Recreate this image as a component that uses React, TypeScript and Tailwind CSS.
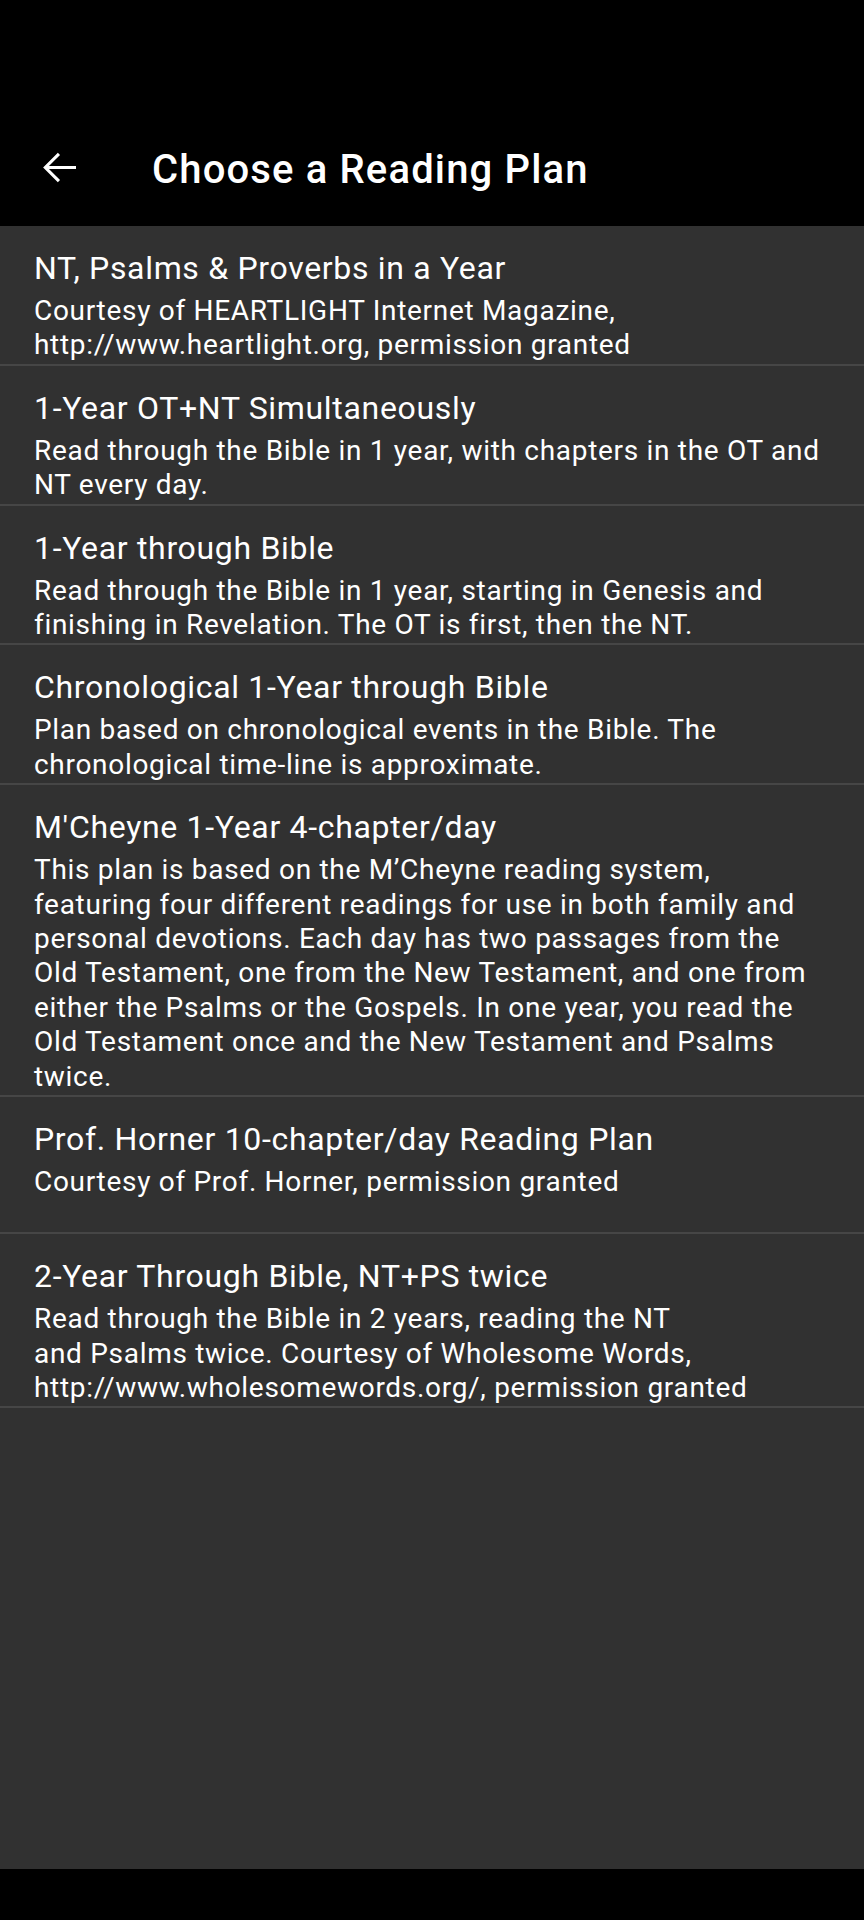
import React from "react";

interface Plan {
  title: string;
  lines: string[];
  minH?: boolean;
}

const plans: Plan[] = [
  {
    title: "NT, Psalms & Proverbs in a Year",
    lines: [
      "Courtesy of HEARTLIGHT Internet Magazine, http://www.heartlight.org, permission granted",
    ],
  },
  {
    title: "1-Year OT+NT Simultaneously",
    lines: [
      "Read through the Bible in 1 year, with chapters in the OT and NT every day.",
    ],
  },
  {
    title: "1-Year through Bible",
    lines: [
      "Read through the Bible in 1 year, starting in Genesis and finishing in Revelation. The OT is first, then the NT.",
    ],
  },
  {
    title: "Chronological 1-Year through Bible",
    lines: [
      "Plan based on chronological events in the Bible. The chronological time-line is approximate.",
    ],
  },
  {
    title: "M'Cheyne 1-Year 4-chapter/day",
    lines: [
      "This plan is based on the M’Cheyne reading system, featuring four different readings for use in both family and personal devotions. Each day has two passages from the Old Testament, one from the New Testament, and one from either the Psalms or the Gospels. In one year, you read the Old Testament once and the New Testament and Psalms twice.",
    ],
  },
  {
    title: "Prof. Horner 10-chapter/day Reading Plan",
    lines: ["Courtesy of Prof. Horner, permission granted"],
    minH: true,
  },
  {
    title: "2-Year Through Bible, NT+PS twice",
    lines: [
      "Read through the Bible in 2 years, reading the NT",
      "and Psalms twice. Courtesy of Wholesome Words, http://www.wholesomewords.org/, permission granted",
    ],
  },
];

const PlanRow: React.FC<{ plan: Plan }> = ({ plan }) => {
  return (
    <div
      className={`border-b-2 border-[#464646] px-[34px] pt-[22px] pb-[1px] ${
        plan.minH ? "min-h-[137px]" : ""
      }`}
    >
      <div className="text-[32px] leading-[40px] tracking-[0.68px] text-white">
        {plan.title}
      </div>
      <div className="mt-[6px] text-[28px] leading-[34.4px] tracking-[0.7px] text-white">
        {plan.lines.map((l, i) => (
          <React.Fragment key={i}>
            {i > 0 && <br />}
            {l}
          </React.Fragment>
        ))}
      </div>
    </div>
  );
};

export default function App() {
  return (
    <div
      className="flex h-[1920px] w-[864px] flex-col bg-black"
      style={{ fontFamily: "Roboto, 'Noto Sans', sans-serif" }}
    >
      <header className="flex h-[226px] shrink-0 items-end bg-black pb-[36px]">
        <div className="flex h-[40px] items-center">
          <div className="mb-[6px] flex w-[152px] items-center pl-[43px]">
            <svg width="33" height="33" viewBox="4 4 16 16" fill="white">
              <path d="M20 11.25H6.9l5.35-5.35L11.2 4.85 4.05 12l7.15 7.15 1.05-1.05-5.35-5.35H20z" />
            </svg>
          </div>
          <h1 className="text-[40px] font-medium leading-[40px] tracking-[1.15px] text-white">
            Choose a Reading Plan
          </h1>
        </div>
      </header>
      <main className="flex-1 bg-[#313131]">
        {plans.map((p) => (
          <PlanRow key={p.title} plan={p} />
        ))}
      </main>
      <div className="h-[51px] shrink-0 bg-black" />
    </div>
  );
}
